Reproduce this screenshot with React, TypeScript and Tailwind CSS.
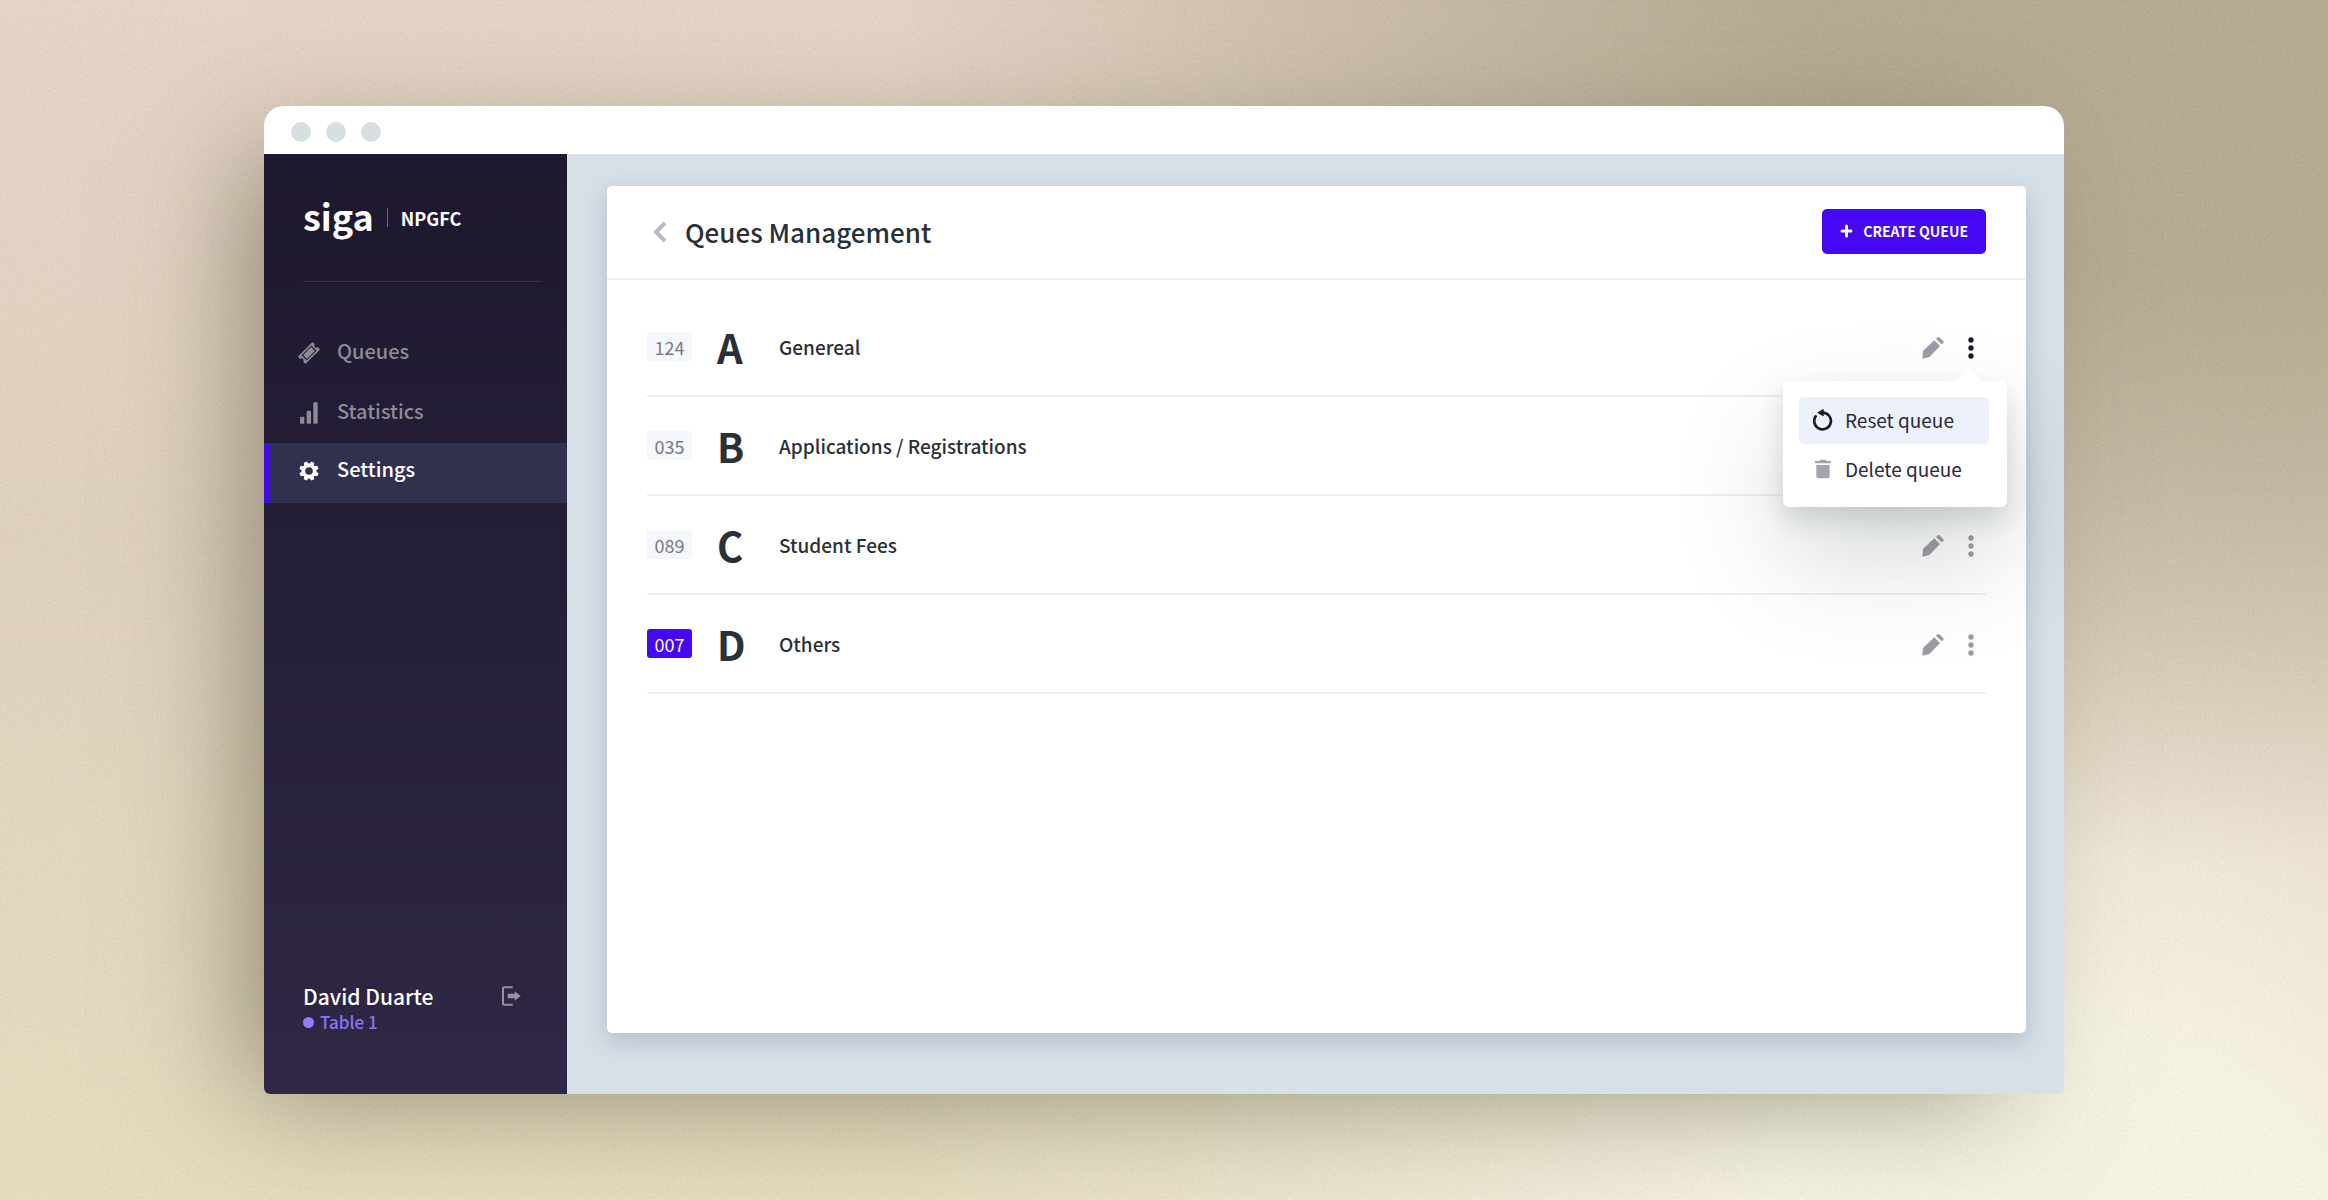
import type { ReactNode } from "react";

const queues = [
  { count: "124", letter: "A", name: "Genereal", current: false, menuOpen: true },
  { count: "035", letter: "B", name: "Applications / Registrations", current: false, menuOpen: false },
  { count: "089", letter: "C", name: "Student Fees", current: false, menuOpen: false },
  { count: "007", letter: "D", name: "Others", current: true, menuOpen: false },
];

function TicketIcon() {
  return (
    <svg width="22" height="22" viewBox="-33 -33 66 66" fill="currentColor" aria-hidden="true">
      <g transform="rotate(-45)">
        <path
          fillRule="evenodd"
          d="M-28 -16 H28 Q31 -16 31 -13 V-6 A6 6 0 0 0 31 6 V13 Q31 16 28 16 H-28 Q-31 16 -31 13 V6 A6 6 0 0 0 -31 -6 V-13 Q-31 -16 -28 -16 Z M-21 -11 V11 H21 V-11 Z"
        />
        <rect x="-17" y="-8" width="34" height="16" />
      </g>
    </svg>
  );
}

function BarsIcon() {
  return (
    <svg width="18" height="22" viewBox="0 0 54 66" fill="currentColor" aria-hidden="true">
      <rect x="0" y="44" width="13" height="21" rx="3" />
      <rect x="20" y="26" width="13" height="39" rx="3" />
      <rect x="40" y="1" width="13" height="64" rx="3" />
    </svg>
  );
}

function GearIcon() {
  const teeth = [22.5, 67.5, 112.5, 157.5, 202.5, 247.5, 292.5, 337.5];
  return (
    <svg width="20" height="20" viewBox="-30 -30 60 60" aria-hidden="true">
      <circle r="17" fill="none" stroke="currentColor" strokeWidth="11" />
      {teeth.map((a) => (
        <path key={a} d="M-7 -20 L-5 -29 L5 -29 L7 -20 Z" fill="currentColor" transform={`rotate(${a})`} />
      ))}
    </svg>
  );
}

function LogoutIcon() {
  return (
    <svg width="19" height="20" viewBox="0 0 57 60" aria-hidden="true">
      <path d="M32 4 H6 Q3 4 3 7 V53 Q3 56 6 56 H32" fill="none" stroke="currentColor" strokeWidth="6" />
      <path d="M17 23 H38 V16 L56 30 L38 44 V37 H17 Z" fill="currentColor" />
    </svg>
  );
}

function PencilIcon() {
  return (
    <svg width="22" height="22" viewBox="0 0 66 66" fill="currentColor" aria-hidden="true">
      <path d="M1 65 L3 44 Q3 42 5 40 L37 10 L54 27 L23 59 Q21 61 19 61 Z" />
      <path d="M42 6 L47 1 Q50 -1 52 1 L64 13 Q66 15 64 18 L59 22 Z" />
    </svg>
  );
}

function DotsIcon() {
  return (
    <svg width="6" height="22" viewBox="0 0 18 66" fill="currentColor" aria-hidden="true">
      <circle cx="9" cy="9" r="8" />
      <circle cx="9" cy="33" r="8" />
      <circle cx="9" cy="57" r="8" />
    </svg>
  );
}

function ResetIcon() {
  return (
    <svg width="20" height="22" viewBox="0 0 60 66" aria-hidden="true">
      <path d="M29 11 A25 25 0 1 1 8 22" fill="none" stroke="currentColor" strokeWidth="8" strokeLinecap="round" />
      <path d="M14 11 L31 1 V21 Z" fill="currentColor" stroke="currentColor" strokeWidth="2" strokeLinejoin="round" />
    </svg>
  );
}

function TrashIcon() {
  return (
    <svg width="16" height="20" viewBox="0 0 48 60" fill="currentColor" aria-hidden="true">
      <path d="M13 6 Q14 2 18 2 H30 Q34 2 35 6 H46 Q48 6 48 9 V13 H0 V9 Q0 6 2 6 Z" />
      <path d="M4 18 H44 V52 Q44 58 38 58 H10 Q4 58 4 52 Z" />
    </svg>
  );
}

function NavItem({ icon, label, active = false }: { icon: ReactNode; label: string; active?: boolean }) {
  return (
    <a
      href="#"
      aria-current={active ? "page" : undefined}
      className={
        active
          ? "flex h-[60px] items-center border-l-[5px] border-[#4408f5] bg-[#32304f] pb-1 pl-6 text-white"
          : "flex h-[60px] items-center border-l-[5px] border-transparent pl-6 text-[#8e8b97]"
      }
    >
      <span className="flex w-8 justify-center">{icon}</span>
      <span className="pb-1 pl-3 text-[20px] font-medium">{label}</span>
    </a>
  );
}

function QueueMenu() {
  return (
    <div
      role="menu"
      className="absolute -right-[21px] top-[46px] z-10 flex w-56 flex-col gap-0.5 rounded-md bg-white pb-3.5 pl-4 pr-[18px] pt-4 text-[#2c2842] shadow-[0_12px_24px_rgba(40,50,60,0.15),0_50px_110px_rgba(40,60,60,0.2)]"
    >
      <svg className="absolute -top-3 right-[25px]" width="26" height="12" viewBox="0 0 26 12" aria-hidden="true">
        <path d="M0 12 L11 1 Q13 -1 15 1 L26 12 Z" fill="#fff" />
      </svg>
      <button role="menuitem" className="flex h-[47px] items-center rounded-[5px] bg-[#edf2fa] pl-3.5 text-[19px]">
        <span className="flex w-5 justify-center text-[#1d1730]">
          <ResetIcon />
        </span>
        <span className="pl-3">Reset queue</span>
      </button>
      <button role="menuitem" className="flex h-[47px] items-center rounded-[5px] pl-3.5 text-[19px]">
        <span className="flex w-5 justify-center text-[#a5a2ad]">
          <TrashIcon />
        </span>
        <span className="pl-3">Delete queue</span>
      </button>
    </div>
  );
}

function Sidebar() {
  return (
    <aside className="flex w-[303px] shrink-0 flex-col bg-linear-to-b from-[#1e182e] to-[#2f2745]">
      <div className="ml-[39px] mr-[26px] flex h-[128px] items-center gap-[13px] border-b border-[#3a3548] text-white">
        <span className="pb-1.5 text-[36px] font-bold leading-none">siga</span>
        <span className="h-[19px] w-px bg-[#6d6978]" />
        <span className="text-[18px] font-bold leading-none">NPGFC</span>
      </div>
      <nav className="flex flex-col pt-[41px]">
        <NavItem icon={<TicketIcon />} label="Queues" />
        <NavItem icon={<BarsIcon />} label="Statistics" />
        <NavItem icon={<GearIcon />} label="Settings" active />
      </nav>
      <div className="mb-[60px] ml-[39px] mr-[46px] mt-auto">
        <div className="flex items-center justify-between">
          <span className="text-[21px] font-medium leading-7 text-white">David Duarte</span>
          <button aria-label="Log out" className="text-[#96929f]">
            <LogoutIcon />
          </button>
        </div>
        <div className="flex items-center gap-1.5 text-[17px] font-medium leading-6 text-[#8a74f8]">
          <span className="size-[11px] rounded-full bg-[#927bff]" />
          Table 1
        </div>
      </div>
    </aside>
  );
}

export default function App() {
  return (
    <div className="relative isolate flex min-h-screen bg-[#dccdb9] bg-[radial-gradient(58%_72%_at_96%_0%,#b0a68c_32%,transparent_100%),radial-gradient(50%_75%_at_88%_105%,#f7f3e2_25%,transparent_100%),linear-gradient(to_right,transparent_45%,#dbc4b6_100%),linear-gradient(to_bottom,#e5d2c5,#decfbc_45%,#e5dcbc)] px-[264px] py-[106px] font-['Noto_Sans_CJK_JP','Noto_Sans_CJK_SC',sans-serif] text-[#2a2f38]">
      <svg className="absolute inset-0 -z-10 size-full opacity-15" aria-hidden="true">
        <filter id="grain">
          <feTurbulence type="fractalNoise" baseFrequency="0.5" numOctaves="2" />
          <feColorMatrix
            type="matrix"
            values="0.9 0.9 0.9 0 -0.6  0.9 0.9 0.9 0 -0.62  0.9 0.9 0.9 0 -0.7  0 0 0 0 0.6"
          />
        </filter>
        <rect width="100%" height="100%" filter="url(#grain)" />
      </svg>

      <div className="flex min-w-0 flex-1 flex-col overflow-hidden rounded-b-md rounded-t-[20px] shadow-[-40px_24px_110px_-24px_rgba(75,75,50,0.55)]">
        <div className="flex h-12 items-center gap-[15px] bg-white pl-[27px] pt-1">
          <span className="size-5 rounded-full bg-[#d8dfe3]" />
          <span className="size-5 rounded-full bg-[#d8dfe3]" />
          <span className="size-5 rounded-full bg-[#d8dfe3]" />
        </div>

        <div className="flex flex-1">
          <Sidebar />

          <main className="flex min-w-0 flex-1 bg-[#d7dfe7] pb-[61px] pl-10 pr-[38px] pt-8">
            <section className="flex-1 rounded-[5px] bg-white shadow-[0_8px_24px_rgba(60,70,100,0.22)]">
              <header className="flex h-[94px] items-center justify-between border-b-2 border-[#eeeeef] pb-0.5 pl-[38px] pr-10">
                <div className="flex items-center pt-0.5">
                  <button aria-label="Back" className="flex w-10 justify-center pr-2.5 text-[#bab8c1]">
                    <svg width="14" height="22" viewBox="0 0 14 22" fill="none" stroke="currentColor" strokeWidth="4" aria-hidden="true">
                      <path d="M12 2 L3 11 L12 20" />
                    </svg>
                  </button>
                  <h1 className="text-[26px] font-medium leading-9">Qeues Management</h1>
                </div>
                <button className="flex h-[45px] items-center gap-2.5 rounded-[5px] bg-[#4408f5] px-[18px] text-[14px] font-bold leading-5 text-white">
                  <svg width="13" height="14" viewBox="0 0 13 14" stroke="currentColor" strokeWidth="3" strokeLinecap="round" aria-hidden="true">
                    <path d="M2 7 H11 M6.500 2 V12" />
                  </svg>
                  CREATE QUEUE
                </button>
              </header>

              <ul className="px-10 pt-[18px]">
                {queues.map((q) => (
                  <li key={q.letter} className="flex h-[99px] items-center border-b-2 border-[#efefef]">
                    <span
                      className={
                        q.current
                          ? "flex h-[29px] w-[45px] items-center justify-center rounded-[3px] bg-[#4408f5] text-[18px] leading-6 text-white"
                          : "flex h-[29px] w-[45px] items-center justify-center rounded-[3px] bg-[#f4f7fb] text-[18px] leading-6 text-[#7b7886]"
                      }
                    >
                      {q.count}
                    </span>
                    <span className="w-20 pl-[25px] text-[40px] font-bold leading-none">{q.letter}</span>
                    <span className="flex-1 pl-[7px] text-[19px] font-medium leading-7">{q.name}</span>
                    <div className="relative flex items-center gap-6 pr-3 pt-0.5 text-[#9f9ca8]">
                      <button aria-label={`Edit ${q.name}`}>
                        <PencilIcon />
                      </button>
                      <button aria-label={`Options for ${q.name}`} className={q.menuOpen ? "text-[#1d1730]" : ""}>
                        <DotsIcon />
                      </button>
                      {q.menuOpen && <QueueMenu />}
                    </div>
                  </li>
                ))}
              </ul>
            </section>
          </main>
        </div>
      </div>
    </div>
  );
}
